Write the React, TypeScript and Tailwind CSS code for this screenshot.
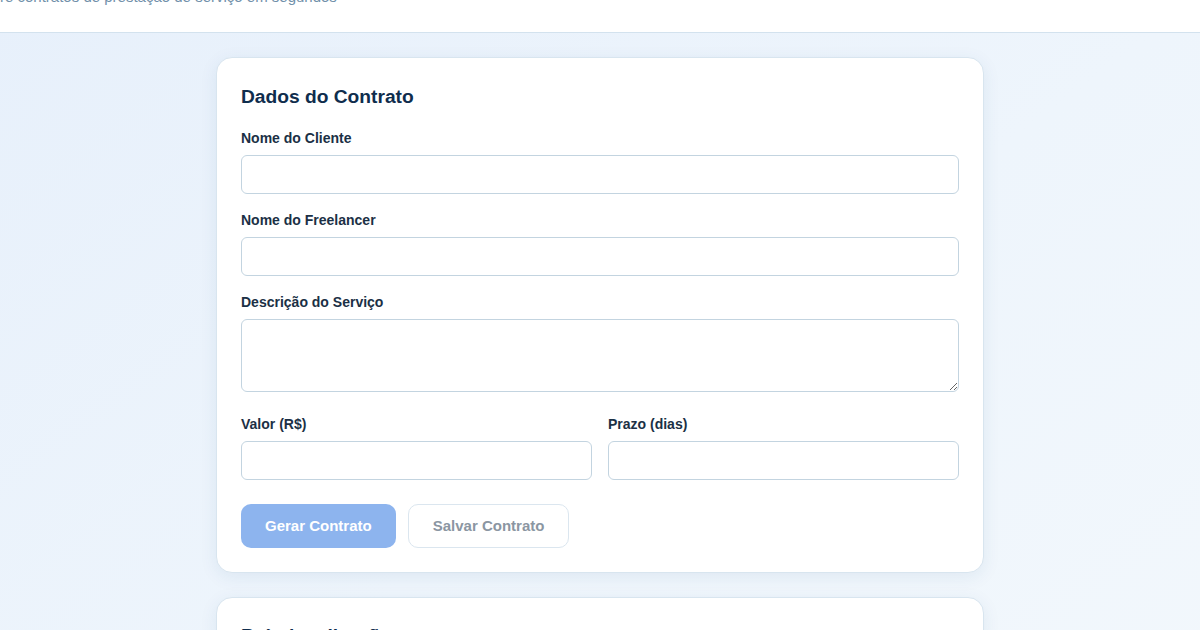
import React from "react";

const font = { fontFamily: '"Liberation Sans", Arial, sans-serif' };

function Field({ label, children }: { label: string; children: React.ReactNode }) {
  return (
    <div className="flex flex-col">
      <label className="mb-[7px] text-sm font-bold leading-5 text-[#1b3045]">{label}</label>
      {children}
    </div>
  );
}

const inputCls =
  "block w-full h-[39px] rounded-[6px] border border-[#c3d4e0] bg-white px-3 text-sm outline-none";

export default function App() {
  return (
    <div style={font} className="min-h-[630px] w-full overflow-hidden bg-gradient-to-br from-[#e7f0fb] via-[#eef5fc] to-[#f3f8fc]">
      <header className="h-[33px] overflow-hidden border-b border-[#d3e2ee] bg-white">
        <p className="ml-[-20px] mt-[-13px] whitespace-nowrap text-[15px] leading-5 text-[#7190aa]">
          Gere contratos de prestação de serviço em segundos
        </p>
      </header>
      <main className="mx-auto w-[768px] pt-[24px]">
        <section className="rounded-2xl border border-[#d8e5ef] bg-white px-6 pb-6 pt-[25px] shadow-[0_4px_18px_rgba(30,80,130,0.08)]">
          <h2 className="mb-[17px] text-[19.2px] font-bold leading-7 text-[#0f2d4d]">Dados do Contrato</h2>
          <div className="flex flex-col gap-[16px]">
            <Field label="Nome do Cliente">
              <input className={inputCls} />
            </Field>
            <Field label="Nome do Freelancer">
              <input className={inputCls} />
            </Field>
            <Field label="Descrição do Serviço">
              <textarea className="block h-[73px] w-full resize-y rounded-[6px] border border-[#c3d4e0] bg-white px-3 py-2 text-sm outline-none" />
            </Field>
            <div className="mt-[6px] grid grid-cols-2 gap-4">
              <Field label="Valor (R$)">
                <input className={inputCls} />
              </Field>
              <Field label="Prazo (dias)">
                <input className={inputCls} />
              </Field>
            </div>
          </div>
          <div className="mt-[24px] flex gap-3">
            <button className="h-[44px] rounded-[10px] bg-[#8db4ee] px-6 text-[15px] font-bold text-white">
              Gerar Contrato
            </button>
            <button className="h-[44px] rounded-[10px] border border-[#dbe6ef] bg-white px-6 text-[15px] font-bold text-[#8b96a2]">
              Salvar Contrato
            </button>
          </div>
        </section>
        <section className="mt-[24px] rounded-2xl border border-[#d8e5ef] bg-white px-6 pt-6 pb-6 shadow-[0_4px_18px_rgba(30,80,130,0.08)]">
          <h2 className="text-[19.2px] font-bold leading-7 text-[#0f2d4d]">Pré-visualização</h2>
          <div className="h-[200px]" />
        </section>
      </main>
    </div>
  );
}
